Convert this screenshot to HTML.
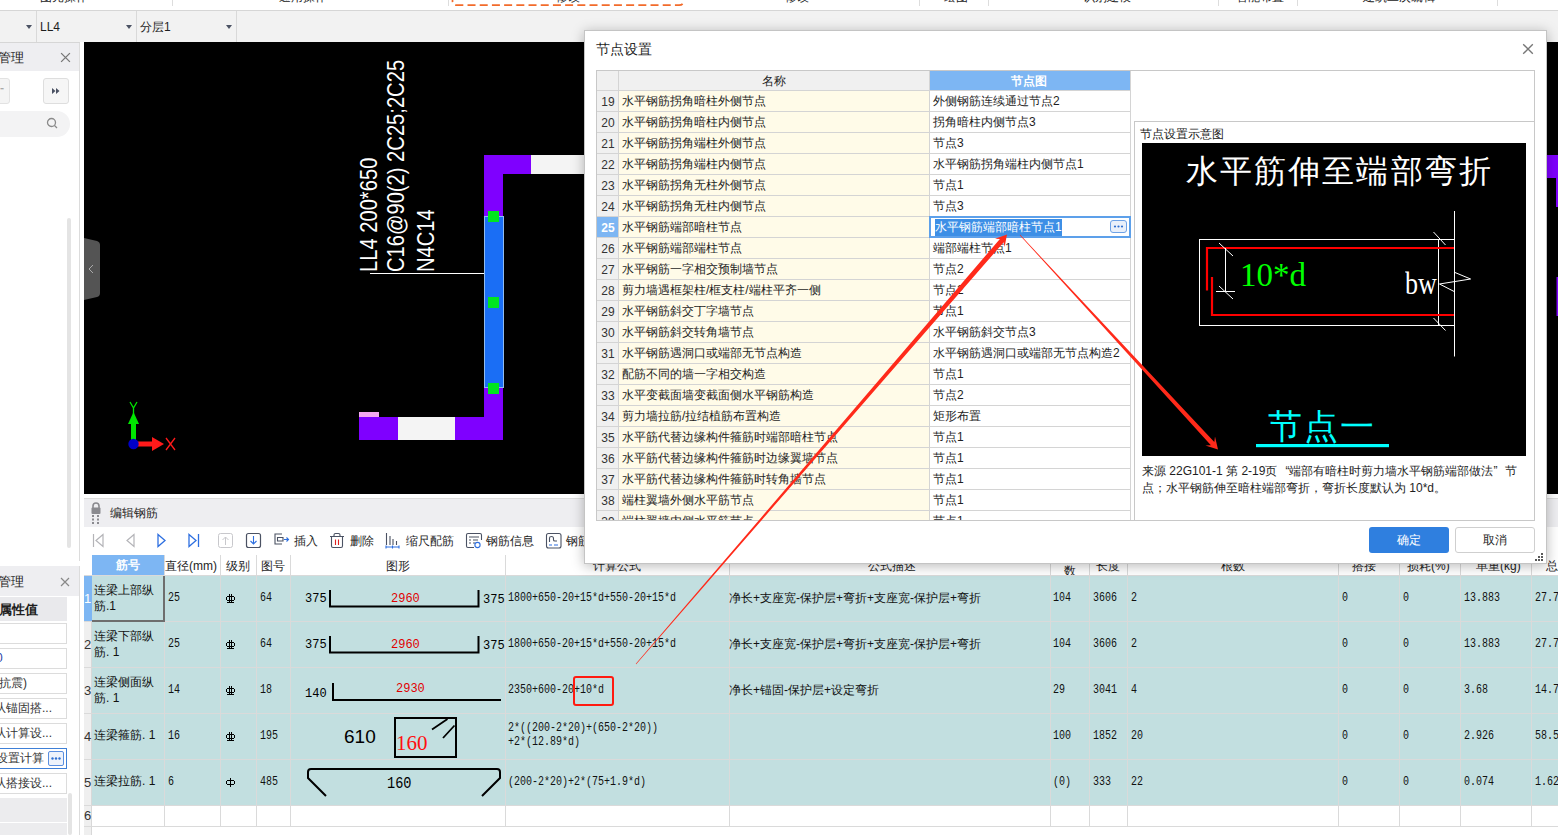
<!DOCTYPE html><html><head><meta charset="utf-8"><style>
*{box-sizing:border-box;margin:0;padding:0}
html,body{width:1558px;height:835px;overflow:hidden;background:#fff;font-family:"Liberation Sans",sans-serif;font-size:12px;color:#222;position:relative}
.ab{position:absolute}
.t{position:absolute;white-space:nowrap;line-height:1}
</style></head><body>
<div class="ab" style="left:0;top:0;width:1558px;height:11px;background:#fff;border-bottom:1px solid #d6d6d6;overflow:hidden">
<div class="t" style="left:40px;top:-9px;font-size:12px;color:#222">图元操作</div>
<div class="t" style="left:279px;top:-9px;font-size:12px;color:#222">通用操作</div>
<div class="t" style="left:556px;top:-9px;font-size:12px;color:#222">修改</div>
<div class="t" style="left:785px;top:-9px;font-size:12px;color:#222">修改</div>
<div class="t" style="left:944px;top:-9px;font-size:12px;color:#222">绘图</div>
<div class="t" style="left:1083px;top:-9px;font-size:12px;color:#222">识别建模</div>
<div class="t" style="left:1236px;top:-9px;font-size:12px;color:#222">智能布置</div>
<div class="t" style="left:1363px;top:-9px;font-size:12px;color:#222">建筑二次编辑</div>
<div class="ab" style="left:172px;top:0;width:1px;height:6px;background:#ddd"></div>
<div class="ab" style="left:448px;top:0;width:1px;height:6px;background:#ddd"></div>
<div class="ab" style="left:919px;top:0;width:1px;height:6px;background:#ddd"></div>
<div class="ab" style="left:988px;top:0;width:1px;height:6px;background:#ddd"></div>
<div class="ab" style="left:1218px;top:0;width:1px;height:6px;background:#ddd"></div>
<div class="ab" style="left:1297px;top:0;width:1px;height:6px;background:#ddd"></div>
<div class="ab" style="left:1497px;top:0;width:1px;height:6px;background:#ddd"></div>
<svg class="ab" style="left:448px;top:0" width="240" height="10"><path d="M4.5 -6 V1 Q4.5 5.2 9 5.2 H231 Q235.5 5.2 235.5 1 V-6" stroke="#f26b2b" stroke-width="1.7" stroke-dasharray="8 4.2" fill="none"/></svg>
</div>
<div class="ab" style="left:0;top:11px;width:1558px;height:31px;background:#f2f2f2"></div>
<div class="ab" style="left:36px;top:11px;width:1px;height:31px;background:#d9d9d9"></div>
<div class="ab" style="left:136px;top:11px;width:1px;height:31px;background:#d9d9d9"></div>
<div class="ab" style="left:236px;top:11px;width:1px;height:31px;background:#d9d9d9"></div>
<div class="ab" style="left:26px;top:25px;width:0;height:0;border-left:3px solid transparent;border-right:3px solid transparent;border-top:4px solid #4b5263"></div>
<div class="ab" style="left:126px;top:25px;width:0;height:0;border-left:3px solid transparent;border-right:3px solid transparent;border-top:4px solid #4b5263"></div>
<div class="ab" style="left:226px;top:25px;width:0;height:0;border-left:3px solid transparent;border-right:3px solid transparent;border-top:4px solid #4b5263"></div>
<div class="t" style="left:40px;top:21px;font-size:12px;color:#1e1e1e">LL4</div>
<div class="t" style="left:140px;top:21px;font-size:12px;color:#1e1e1e">分层1</div>
<div class="ab" style="left:84px;top:42px;width:1474px;height:452px;background:#000;overflow:hidden"></div>
<div class="ab" style="left:0;top:42px;width:80px;height:519px;background:#fff;border-right:1px solid #dcdcdc"></div>
<div class="ab" style="left:0;top:42px;width:79px;height:29px;background:#eeeef1"></div>
<div class="t" style="left:-2px;top:51px;font-size:13px;color:#1e1e1e">管理</div>
<div class="ab" style="left:0;top:42px;width:80px;height:1px;background:#d6d6d6"></div>
<svg class="ab" style="left:60px;top:52px" width="11" height="11" viewBox="0 0 10 10"><path d="M1 1L9 9M9 1L1 9" stroke="#777" stroke-width="1.2" fill="none"/></svg>
<div class="ab" style="left:-10px;top:78px;width:20px;height:26px;background:#f4f4f4;border:1px solid #e2e2e2;border-radius:3px"></div>
<div class="t" style="left:0px;top:86px;font-size:12px;color:#555">⁻</div>
<div class="ab" style="left:43px;top:78px;width:26px;height:26px;background:#f6f6f6;border:1px solid #dedede;border-radius:3px"></div>
<svg class="ab" style="left:51px;top:87px" width="10" height="8" viewBox="0 0 10 8"><path d="M1 1L4.5 4L1 7ZM5 1L8.5 4L5 7Z" fill="#4b5263"/></svg>
<div class="ab" style="left:-20px;top:111px;width:90px;height:26px;background:#f3f3f4;border-radius:13px"></div>
<svg class="ab" style="left:46px;top:117px" width="13" height="13" viewBox="0 0 13 13"><circle cx="5.5" cy="5.5" r="4" stroke="#8a8a8a" stroke-width="1.3" fill="none"/><path d="M8.5 8.5L11 11" stroke="#8a8a8a" stroke-width="1.3"/></svg>
<div class="ab" style="left:67px;top:218px;width:4px;height:330px;background:#e4e4e4;border-radius:2px"></div>
<div class="ab" style="left:0;top:566px;width:80px;height:269px;background:#fff;border-right:1px solid #dcdcdc"></div>
<div class="ab" style="left:0;top:566px;width:79px;height:30px;background:#eeeef1"></div>
<div class="t" style="left:-2px;top:575px;font-size:13px;color:#1e1e1e">管理</div>
<svg class="ab" style="left:60px;top:577px" width="10" height="10" viewBox="0 0 10 10"><path d="M1 1L9 9M9 1L1 9" stroke="#888" stroke-width="1.2" fill="none"/></svg>
<div class="ab" style="left:0;top:597px;width:67px;height:24px;background:#e9e9ec"></div>
<div class="t" style="left:-1px;top:603px;font-size:13px;font-weight:bold;color:#1e1e1e">属性值</div>
<div class="ab" style="left:-5px;top:623px;width:72px;height:21px;background:#fff;border:1px solid #dcdcdc"></div>
<div class="t" style="left:-1px;top:627px;font-size:12px;color:#333"></div>
<div class="ab" style="left:-5px;top:648px;width:72px;height:21px;background:#fff;border:1px solid #dcdcdc"></div>
<div class="t" style="left:-4px;top:652px;font-size:12px;color:#1f3fa6">0</div>
<div class="ab" style="left:-5px;top:673px;width:72px;height:21px;background:#fff;border:1px solid #dcdcdc"></div>
<div class="t" style="left:-1px;top:677px;font-size:12px;color:#333">抗震)</div>
<div class="ab" style="left:-5px;top:698px;width:72px;height:21px;background:#fff;border:1px solid #dcdcdc"></div>
<div class="t" style="left:-6px;top:702px;font-size:12px;color:#333">从锚固搭...</div>
<div class="ab" style="left:-5px;top:723px;width:72px;height:21px;background:#fff;border:1px solid #dcdcdc"></div>
<div class="t" style="left:-6px;top:727px;font-size:12px;color:#333">从计算设...</div>
<div class="ab" style="left:-5px;top:748px;width:72px;height:21px;background:#fff;border:1px solid #3e7fd6"></div>
<div class="t" style="left:-4px;top:752px;font-size:12px;color:#333">设置计算</div>
<div class="ab" style="left:-5px;top:773px;width:72px;height:21px;background:#fff;border:1px solid #dcdcdc"></div>
<div class="t" style="left:-6px;top:777px;font-size:12px;color:#333">从搭接设...</div>
<div class="ab" style="left:48px;top:751px;width:16px;height:15px;border:1px solid #5a8fe0;border-radius:2px;background:#eef3fb"></div>
<svg class="ab" style="left:48px;top:751px" width="16" height="15"><circle cx="4.5" cy="7.5" r="1.2" fill="#2f6fd0"/><circle cx="8" cy="7.5" r="1.2" fill="#2f6fd0"/><circle cx="11.5" cy="7.5" r="1.2" fill="#2f6fd0"/></svg>
<div class="ab" style="left:0;top:798px;width:67px;height:37px;background:#ececee"></div>
<div class="ab" style="left:0;top:822px;width:67px;height:1px;background:#fff"></div>
<div class="ab" style="left:68px;top:793px;width:4px;height:42px;background:#e4e4e4;border-radius:2px"></div>
<svg class="ab" style="left:0;top:0" width="1558" height="835">
<path d="M84 238 L97 241 Q100 242 100 245 L100 293 Q100 296 97 297 L84 300 Z" fill="#545454"/>
<path d="M93 265 L89 269 L93 273" stroke="#aaa" stroke-width="1" fill="none"/>
<rect x="484" y="155" width="47" height="19" fill="#7f00ff"/>
<rect x="531" y="155" width="60" height="19" fill="#f4f4f4"/>
<rect x="484" y="155" width="19" height="285" fill="#7f00ff"/>
<rect x="359" y="417" width="144" height="23" fill="#7f00ff"/>
<rect x="398" y="417" width="57" height="23" fill="#f4f4f4"/>
<rect x="359" y="412" width="20" height="5" fill="#f3a8f0"/>
<rect x="484.5" y="216.5" width="19" height="171" fill="#1a6ef5" stroke="#8fbcf0" stroke-width="1"/>
<rect x="488" y="211" width="11" height="11" fill="#00e61e"/>
<rect x="488" y="297" width="11" height="11" fill="#00e61e"/>
<rect x="488" y="383" width="11" height="11" fill="#00e61e"/>
<rect x="370" y="273" width="114" height="1" fill="#fff"/>
<rect x="1547" y="155" width="11" height="23" fill="#7f00ff"/>
<rect x="1556" y="178" width="2" height="29" fill="#7f00ff"/>
<rect x="1556.5" y="277" width="1.5" height="39" fill="#7f00ff"/>
<rect x="131" y="421" width="5" height="23" fill="#00e600"/>
<path d="M128 424 L133.5 412 L139 424 Z" fill="#00e600"/>
<rect x="134" y="441.5" width="20" height="5" fill="#ff1a1a"/>
<path d="M152 437 L164 444 L152 451 Z" fill="#ff1a1a"/>
<circle cx="133.5" cy="444" r="5.2" fill="#0000c8"/>
<path d="M130 402 L133.5 408 L137 402 M133.5 408 L133.5 414" stroke="#00e600" stroke-width="1.3" fill="none"/>
<path d="M166 438 L175 450 M175 438 L166 450" stroke="#ff1a1a" stroke-width="1.3" fill="none"/>
</svg>
<div class="t" style="left:356.5px;top:272px;font-size:24px;color:#fff;transform-origin:0 0;transform:rotate(-90deg) scaleX(0.84)">LL4 200*650</div>
<div class="t" style="left:384px;top:272px;font-size:24px;color:#fff;transform-origin:0 0;transform:rotate(-90deg) scaleX(0.84)">C16@90(2) 2C25;2C25</div>
<div class="t" style="left:414px;top:272px;font-size:24px;color:#fff;transform-origin:0 0;transform:rotate(-90deg) scaleX(0.84)">N4C14</div>
<div class="ab" style="left:84px;top:498px;width:1474px;height:337px;background:#fff;border-top:1px solid #dcdcdc"></div>
<div class="ab" style="left:84px;top:499px;width:1474px;height:28px;background:#eeeef1"></div>
<svg class="ab" style="left:89px;top:501px" width="14" height="24" viewBox="0 0 14 24"><path d="M4 7 V5 A3 3 0 0 1 10 5 V7" stroke="#8a8a8f" stroke-width="1.6" fill="none"/><rect x="2.5" y="6.5" width="9" height="6.5" rx="1" fill="#8a8a8f"/><rect x="3" y="14" width="2" height="2" fill="#8a8a8f"/><rect x="8" y="14" width="2" height="2" fill="#8a8a8f"/><rect x="3" y="17.5" width="2" height="2" fill="#8a8a8f"/><rect x="8" y="17.5" width="2" height="2" fill="#8a8a8f"/><rect x="3" y="21" width="2" height="2" fill="#8a8a8f"/><rect x="8" y="21" width="2" height="2" fill="#8a8a8f"/></svg>
<div class="t" style="left:110px;top:507px;font-size:12px;color:#1e1e1e">编辑钢筋</div>
<svg class="ab" style="left:84px;top:527px" width="500" height="28" viewBox="84 527 500 28"><path d="M93.5 534 V547" stroke="#b4b4b8" stroke-width="1.2"/><path d="M103 534.5 L96 540.5 L103 546.5 Z" stroke="#b4b4b8" stroke-width="1.2" fill="none"/><path d="M134 534.5 L127 540.5 L134 546.5 Z" stroke="#b4b4b8" stroke-width="1.2" fill="none"/><path d="M158 534.5 L165 540.5 L158 546.5 Z" stroke="#2d6fe0" stroke-width="1.3" fill="none"/><path d="M189 534.5 L196 540.5 L189 546.5 Z" stroke="#2d6fe0" stroke-width="1.3" fill="none"/><path d="M198.5 534 V547" stroke="#2d6fe0" stroke-width="1.3"/><rect x="218.5" y="533.5" width="14" height="14" rx="2" stroke="#c8c8cc" stroke-width="1" fill="none"/><path d="M225.5 537 V545 M222.5 540 L225.5 537 L228.5 540" stroke="#c8c8cc" stroke-width="1" fill="none"/><rect x="246.5" y="533.5" width="14" height="14" rx="2" stroke="#4b5263" stroke-width="1.2" fill="none"/><path d="M253.5 536 V544 M250.5 541 L253.5 544 L256.5 541" stroke="#2d6fe0" stroke-width="1.1" fill="none"/><path d="M282 534 H275 V544 H282 M277.5 537.5 H283 V541 H277.5 Z" stroke="#4b5263" stroke-width="1.1" fill="none"/><path d="M284 539.5 H288.5 M286.5 537.5 L288.5 539.5 L286.5 541.5" stroke="#2d6fe0" stroke-width="1.1" fill="none"/><path d="M330 536.5 H344 M334 536.5 V535 Q334 533.5 335.5 533.5 H338.5 Q340 533.5 340 535 V536.5 M331.5 537 V546 Q331.5 547.5 333 547.5 H341 Q342.5 547.5 342.5 546 V537" stroke="#4b5263" stroke-width="1.1" fill="none"/><path d="M335.5 539.5 V545 M338.5 539.5 V545" stroke="#e02020" stroke-width="1.1"/><path d="M386.5 533 V545 M390 536 V545 M393 539 V545 M396.5 541 V545" stroke="#4b5263" stroke-width="1.1" fill="none"/><path d="M385.5 547 H399.5 M386 545.5 V548.5 M392.5 545.5 V548.5 M399 545.5 V548.5" stroke="#2d6fe0" stroke-width="1.1" fill="none"/><path d="M474 547.5 H468 Q466.5 547.5 466.5 546 V535 Q466.5 533.5 468 533.5 H480 Q481.5 533.5 481.5 535 V540 M469 537 H479 M469 540 H471 M473 540 H478 M469 543 H471 M473 543 H475" stroke="#4b5263" stroke-width="1.1" fill="none"/><circle cx="477.5" cy="545" r="2.6" stroke="#2d6fe0" stroke-width="1.1" fill="none"/><rect x="546.5" y="533.5" width="14.5" height="14.5" rx="2" stroke="#4b5263" stroke-width="1.1" fill="none"/><path d="M549.5 542 V538 Q549.5 536.5 551.5 536.5 Q553.5 536.5 553.5 538.5 V540 Q553.5 541 555 541 H557" stroke="#4b5263" stroke-width="1.1" fill="none"/><path d="M549 545 H552 M554 545 H558" stroke="#2d6fe0" stroke-width="1.1"/></svg>
<div class="t" style="left:294px;top:535px;font-size:12px;color:#1e1e1e">插入</div>
<div class="t" style="left:350px;top:535px;font-size:12px;color:#1e1e1e">删除</div>
<div class="t" style="left:406px;top:535px;font-size:12px;color:#1e1e1e">缩尺配筋</div>
<div class="t" style="left:486px;top:535px;font-size:12px;color:#1e1e1e">钢筋信息</div>
<div class="t" style="left:566px;top:535px;font-size:12px;color:#1e1e1e">钢筋</div>
<div class="ab" style="left:92px;top:555px;width:73px;height:20px;background:#7db6f3"></div>
<div class="t" style="left:116px;top:559px;font-size:12px;color:#fff;font-weight:bold">筋号</div>
<div class="t" style="left:165px;top:560px;font-size:12px;color:#1e1e1e">直径(mm)</div>
<div class="t" style="left:226px;top:560px;font-size:12px;color:#1e1e1e">级别</div>
<div class="t" style="left:261px;top:560px;font-size:12px;color:#1e1e1e">图号</div>
<div class="t" style="left:386px;top:560px;font-size:12px;color:#1e1e1e">图形</div>
<div class="t" style="left:593px;top:560px;font-size:12px;color:#1e1e1e">计算公式</div>
<div class="t" style="left:868px;top:560px;font-size:12px;color:#1e1e1e">公式描述</div>
<div class="t" style="left:1064px;top:565px;font-size:12px;color:#1e1e1e">数</div>
<div class="t" style="left:1096px;top:560px;font-size:12px;color:#1e1e1e">长度</div>
<div class="t" style="left:1221px;top:560px;font-size:12px;color:#1e1e1e">根数</div>
<div class="t" style="left:1352px;top:560px;font-size:12px;color:#1e1e1e">搭接</div>
<div class="t" style="left:1407px;top:560px;font-size:12px;color:#1e1e1e">损耗(%)</div>
<div class="t" style="left:1476px;top:560px;font-size:12px;color:#1e1e1e">单重(kg)</div>
<div class="t" style="left:1546px;top:560px;font-size:12px;color:#1e1e1e">总重</div>
<div class="ab" style="left:92px;top:575px;width:1466px;height:230px;background:#c2dfe0"></div>
<div class="ab" style="left:84px;top:575px;width:8px;height:260px;background:#efefef;border-right:1px solid #d8d8d8"></div>
<div class="ab" style="left:84px;top:576px;width:8px;height:45px;background:#7db6f3"></div>
<div class="ab" style="left:164px;top:555px;width:1px;height:271px;background:#dadada"></div>
<div class="ab" style="left:220px;top:555px;width:1px;height:271px;background:#dadada"></div>
<div class="ab" style="left:256px;top:555px;width:1px;height:271px;background:#dadada"></div>
<div class="ab" style="left:290px;top:555px;width:1px;height:271px;background:#dadada"></div>
<div class="ab" style="left:505px;top:555px;width:1px;height:271px;background:#dadada"></div>
<div class="ab" style="left:729px;top:555px;width:1px;height:271px;background:#dadada"></div>
<div class="ab" style="left:1050px;top:555px;width:1px;height:271px;background:#dadada"></div>
<div class="ab" style="left:1089px;top:555px;width:1px;height:271px;background:#dadada"></div>
<div class="ab" style="left:1127px;top:555px;width:1px;height:271px;background:#dadada"></div>
<div class="ab" style="left:1338px;top:555px;width:1px;height:271px;background:#dadada"></div>
<div class="ab" style="left:1399px;top:555px;width:1px;height:271px;background:#dadada"></div>
<div class="ab" style="left:1460px;top:555px;width:1px;height:271px;background:#dadada"></div>
<div class="ab" style="left:1531px;top:555px;width:1px;height:271px;background:#dadada"></div>
<div class="ab" style="left:84px;top:575px;width:1474px;height:1px;background:#dadada"></div>
<div class="ab" style="left:84px;top:621px;width:1474px;height:1px;background:#dadada"></div>
<div class="ab" style="left:84px;top:667px;width:1474px;height:1px;background:#dadada"></div>
<div class="ab" style="left:84px;top:713px;width:1474px;height:1px;background:#dadada"></div>
<div class="ab" style="left:84px;top:759px;width:1474px;height:1px;background:#dadada"></div>
<div class="ab" style="left:84px;top:805px;width:1474px;height:1px;background:#dadada"></div>
<div class="ab" style="left:84px;top:826px;width:1474px;height:1px;background:#dadada"></div>
<div class="ab" style="left:92px;top:576px;width:73px;height:46px;border:2px solid #6e6e6e;border-top:none;border-left:none"></div>
<div class="t" style="left:84px;top:592px;font-size:13px;color:#fff">1</div>
<div class="t" style="left:84px;top:638px;font-size:13px;color:#333">2</div>
<div class="t" style="left:84px;top:684px;font-size:13px;color:#333">3</div>
<div class="t" style="left:84px;top:730px;font-size:13px;color:#333">4</div>
<div class="t" style="left:84px;top:776px;font-size:13px;color:#333">5</div>
<div class="t" style="left:84px;top:809px;font-size:13px;color:#333">6</div>
<div class="ab" style="left:94px;top:582px;font-size:12px;line-height:16px;color:#111;white-space:nowrap">连梁上部纵<br>筋.1</div>
<div class="t" style="left:168px;top:592px;font-family:'Liberation Mono',monospace;font-size:12px;color:#111;transform-origin:0 0;transform:scaleX(0.833);">25</div>
<div class="t" style="left:260px;top:592px;font-family:'Liberation Mono',monospace;font-size:12px;color:#111;transform-origin:0 0;transform:scaleX(0.833);">64</div>
<svg class="ab" style="left:224px;top:592px" width="14" height="12" shape-rendering="crispEdges"><g fill="#000"><rect x="5" y="2" width="1" height="8"/><rect x="7" y="2" width="1" height="8"/><rect x="3" y="4" width="7" height="1"/><rect x="3" y="8" width="7" height="1"/><rect x="2" y="5" width="1" height="3"/><rect x="10" y="5" width="1" height="3"/><rect x="3" y="10" width="7" height="1"/></g></svg>
<div class="t" style="left:508px;top:592px;font-family:'Liberation Mono',monospace;font-size:12px;color:#111;transform-origin:0 0;transform:scaleX(0.833);">1800+650-20+15*d+550-20+15*d</div>
<div class="t" style="left:729px;top:592px;font-size:12px;color:#111">净长+支座宽-保护层+弯折+支座宽-保护层+弯折</div>
<div class="t" style="left:1053px;top:592px;font-family:'Liberation Mono',monospace;font-size:12px;color:#111;transform-origin:0 0;transform:scaleX(0.833);">104</div>
<div class="t" style="left:1093px;top:592px;font-family:'Liberation Mono',monospace;font-size:12px;color:#111;transform-origin:0 0;transform:scaleX(0.833);">3606</div>
<div class="t" style="left:1131px;top:592px;font-family:'Liberation Mono',monospace;font-size:12px;color:#111;transform-origin:0 0;transform:scaleX(0.833);">2</div>
<div class="t" style="left:1342px;top:592px;font-family:'Liberation Mono',monospace;font-size:12px;color:#111;transform-origin:0 0;transform:scaleX(0.833);">0</div>
<div class="t" style="left:1403px;top:592px;font-family:'Liberation Mono',monospace;font-size:12px;color:#111;transform-origin:0 0;transform:scaleX(0.833);">0</div>
<div class="t" style="left:1464px;top:592px;font-family:'Liberation Mono',monospace;font-size:12px;color:#111;transform-origin:0 0;transform:scaleX(0.833);">13.883</div>
<div class="t" style="left:1535px;top:592px;font-family:'Liberation Mono',monospace;font-size:12px;color:#111;transform-origin:0 0;transform:scaleX(0.833);">27.7</div>
<div class="ab" style="left:94px;top:628px;font-size:12px;line-height:16px;color:#111;white-space:nowrap">连梁下部纵<br>筋. 1</div>
<div class="t" style="left:168px;top:638px;font-family:'Liberation Mono',monospace;font-size:12px;color:#111;transform-origin:0 0;transform:scaleX(0.833);">25</div>
<div class="t" style="left:260px;top:638px;font-family:'Liberation Mono',monospace;font-size:12px;color:#111;transform-origin:0 0;transform:scaleX(0.833);">64</div>
<svg class="ab" style="left:224px;top:638px" width="14" height="12" shape-rendering="crispEdges"><g fill="#000"><rect x="5" y="2" width="1" height="8"/><rect x="7" y="2" width="1" height="8"/><rect x="3" y="4" width="7" height="1"/><rect x="3" y="8" width="7" height="1"/><rect x="2" y="5" width="1" height="3"/><rect x="10" y="5" width="1" height="3"/><rect x="3" y="10" width="7" height="1"/></g></svg>
<div class="t" style="left:508px;top:638px;font-family:'Liberation Mono',monospace;font-size:12px;color:#111;transform-origin:0 0;transform:scaleX(0.833);">1800+650-20+15*d+550-20+15*d</div>
<div class="t" style="left:729px;top:638px;font-size:12px;color:#111">净长+支座宽-保护层+弯折+支座宽-保护层+弯折</div>
<div class="t" style="left:1053px;top:638px;font-family:'Liberation Mono',monospace;font-size:12px;color:#111;transform-origin:0 0;transform:scaleX(0.833);">104</div>
<div class="t" style="left:1093px;top:638px;font-family:'Liberation Mono',monospace;font-size:12px;color:#111;transform-origin:0 0;transform:scaleX(0.833);">3606</div>
<div class="t" style="left:1131px;top:638px;font-family:'Liberation Mono',monospace;font-size:12px;color:#111;transform-origin:0 0;transform:scaleX(0.833);">2</div>
<div class="t" style="left:1342px;top:638px;font-family:'Liberation Mono',monospace;font-size:12px;color:#111;transform-origin:0 0;transform:scaleX(0.833);">0</div>
<div class="t" style="left:1403px;top:638px;font-family:'Liberation Mono',monospace;font-size:12px;color:#111;transform-origin:0 0;transform:scaleX(0.833);">0</div>
<div class="t" style="left:1464px;top:638px;font-family:'Liberation Mono',monospace;font-size:12px;color:#111;transform-origin:0 0;transform:scaleX(0.833);">13.883</div>
<div class="t" style="left:1535px;top:638px;font-family:'Liberation Mono',monospace;font-size:12px;color:#111;transform-origin:0 0;transform:scaleX(0.833);">27.7</div>
<div class="ab" style="left:94px;top:674px;font-size:12px;line-height:16px;color:#111;white-space:nowrap">连梁侧面纵<br>筋. 1</div>
<div class="t" style="left:168px;top:684px;font-family:'Liberation Mono',monospace;font-size:12px;color:#111;transform-origin:0 0;transform:scaleX(0.833);">14</div>
<div class="t" style="left:260px;top:684px;font-family:'Liberation Mono',monospace;font-size:12px;color:#111;transform-origin:0 0;transform:scaleX(0.833);">18</div>
<svg class="ab" style="left:224px;top:684px" width="14" height="12" shape-rendering="crispEdges"><g fill="#000"><rect x="5" y="2" width="1" height="8"/><rect x="7" y="2" width="1" height="8"/><rect x="3" y="4" width="7" height="1"/><rect x="3" y="8" width="7" height="1"/><rect x="2" y="5" width="1" height="3"/><rect x="10" y="5" width="1" height="3"/><rect x="3" y="10" width="7" height="1"/></g></svg>
<div class="t" style="left:508px;top:684px;font-family:'Liberation Mono',monospace;font-size:12px;color:#111;transform-origin:0 0;transform:scaleX(0.833);">2350+600-20+10*d</div>
<div class="t" style="left:729px;top:684px;font-size:12px;color:#111">净长+锚固-保护层+设定弯折</div>
<div class="t" style="left:1053px;top:684px;font-family:'Liberation Mono',monospace;font-size:12px;color:#111;transform-origin:0 0;transform:scaleX(0.833);">29</div>
<div class="t" style="left:1093px;top:684px;font-family:'Liberation Mono',monospace;font-size:12px;color:#111;transform-origin:0 0;transform:scaleX(0.833);">3041</div>
<div class="t" style="left:1131px;top:684px;font-family:'Liberation Mono',monospace;font-size:12px;color:#111;transform-origin:0 0;transform:scaleX(0.833);">4</div>
<div class="t" style="left:1342px;top:684px;font-family:'Liberation Mono',monospace;font-size:12px;color:#111;transform-origin:0 0;transform:scaleX(0.833);">0</div>
<div class="t" style="left:1403px;top:684px;font-family:'Liberation Mono',monospace;font-size:12px;color:#111;transform-origin:0 0;transform:scaleX(0.833);">0</div>
<div class="t" style="left:1464px;top:684px;font-family:'Liberation Mono',monospace;font-size:12px;color:#111;transform-origin:0 0;transform:scaleX(0.833);">3.68</div>
<div class="t" style="left:1535px;top:684px;font-family:'Liberation Mono',monospace;font-size:12px;color:#111;transform-origin:0 0;transform:scaleX(0.833);">14.7</div>
<div class="t" style="left:94px;top:729px;font-size:12px;color:#111">连梁箍筋. 1</div>
<div class="t" style="left:168px;top:730px;font-family:'Liberation Mono',monospace;font-size:12px;color:#111;transform-origin:0 0;transform:scaleX(0.833);">16</div>
<div class="t" style="left:260px;top:730px;font-family:'Liberation Mono',monospace;font-size:12px;color:#111;transform-origin:0 0;transform:scaleX(0.833);">195</div>
<svg class="ab" style="left:224px;top:730px" width="14" height="12" shape-rendering="crispEdges"><g fill="#000"><rect x="5" y="2" width="1" height="8"/><rect x="7" y="2" width="1" height="8"/><rect x="3" y="4" width="7" height="1"/><rect x="3" y="8" width="7" height="1"/><rect x="2" y="5" width="1" height="3"/><rect x="10" y="5" width="1" height="3"/><rect x="3" y="10" width="7" height="1"/></g></svg>
<div class="ab" style="left:508px;top:721px;font-family:'Liberation Mono',monospace;font-size:12px;color:#111;transform-origin:0 0;transform:scaleX(0.833);line-height:14px;white-space:nowrap">2*((200-2*20)+(650-2*20))<br>+2*(12.89*d)</div>
<div class="t" style="left:1053px;top:730px;font-family:'Liberation Mono',monospace;font-size:12px;color:#111;transform-origin:0 0;transform:scaleX(0.833);">100</div>
<div class="t" style="left:1093px;top:730px;font-family:'Liberation Mono',monospace;font-size:12px;color:#111;transform-origin:0 0;transform:scaleX(0.833);">1852</div>
<div class="t" style="left:1131px;top:730px;font-family:'Liberation Mono',monospace;font-size:12px;color:#111;transform-origin:0 0;transform:scaleX(0.833);">20</div>
<div class="t" style="left:1342px;top:730px;font-family:'Liberation Mono',monospace;font-size:12px;color:#111;transform-origin:0 0;transform:scaleX(0.833);">0</div>
<div class="t" style="left:1403px;top:730px;font-family:'Liberation Mono',monospace;font-size:12px;color:#111;transform-origin:0 0;transform:scaleX(0.833);">0</div>
<div class="t" style="left:1464px;top:730px;font-family:'Liberation Mono',monospace;font-size:12px;color:#111;transform-origin:0 0;transform:scaleX(0.833);">2.926</div>
<div class="t" style="left:1535px;top:730px;font-family:'Liberation Mono',monospace;font-size:12px;color:#111;transform-origin:0 0;transform:scaleX(0.833);">58.5</div>
<div class="t" style="left:94px;top:775px;font-size:12px;color:#111">连梁拉筋. 1</div>
<div class="t" style="left:168px;top:776px;font-family:'Liberation Mono',monospace;font-size:12px;color:#111;transform-origin:0 0;transform:scaleX(0.833);">6</div>
<div class="t" style="left:260px;top:776px;font-family:'Liberation Mono',monospace;font-size:12px;color:#111;transform-origin:0 0;transform:scaleX(0.833);">485</div>
<svg class="ab" style="left:224px;top:776px" width="14" height="12" shape-rendering="crispEdges"><g fill="#000"><rect x="6" y="2" width="1" height="9"/><rect x="3" y="4" width="7" height="1"/><rect x="3" y="8" width="7" height="1"/><rect x="2" y="5" width="1" height="3"/><rect x="10" y="5" width="1" height="3"/></g></svg>
<div class="t" style="left:508px;top:776px;font-family:'Liberation Mono',monospace;font-size:12px;color:#111;transform-origin:0 0;transform:scaleX(0.833);">(200-2*20)+2*(75+1.9*d)</div>
<div class="t" style="left:1053px;top:776px;font-family:'Liberation Mono',monospace;font-size:12px;color:#111;transform-origin:0 0;transform:scaleX(0.833);">(0)</div>
<div class="t" style="left:1093px;top:776px;font-family:'Liberation Mono',monospace;font-size:12px;color:#111;transform-origin:0 0;transform:scaleX(0.833);">333</div>
<div class="t" style="left:1131px;top:776px;font-family:'Liberation Mono',monospace;font-size:12px;color:#111;transform-origin:0 0;transform:scaleX(0.833);">22</div>
<div class="t" style="left:1342px;top:776px;font-family:'Liberation Mono',monospace;font-size:12px;color:#111;transform-origin:0 0;transform:scaleX(0.833);">0</div>
<div class="t" style="left:1403px;top:776px;font-family:'Liberation Mono',monospace;font-size:12px;color:#111;transform-origin:0 0;transform:scaleX(0.833);">0</div>
<div class="t" style="left:1464px;top:776px;font-family:'Liberation Mono',monospace;font-size:12px;color:#111;transform-origin:0 0;transform:scaleX(0.833);">0.074</div>
<div class="t" style="left:1535px;top:776px;font-family:'Liberation Mono',monospace;font-size:12px;color:#111;transform-origin:0 0;transform:scaleX(0.833);">1.62</div>
<svg class="ab" style="left:290px;top:575px" width="215" height="230" viewBox="290 575 215 230">
<path d="M330 590 V606.5 H478.5 V590" stroke="#000" stroke-width="2" fill="none"/>
<path d="M330 636 V652.5 H478.5 V636" stroke="#000" stroke-width="2" fill="none"/>
<path d="M333 683 V700 H501" stroke="#000" stroke-width="2" fill="none"/>
<rect x="395" y="718" width="61" height="39" stroke="#000" stroke-width="2" fill="none"/>
<path d="M432 729.5 L447.5 719 M443 738 L454.5 725.5" stroke="#000" stroke-width="1.8" fill="none"/>
<path d="M326 796 L308 778 V772 Q308 769 311 769 H497 Q500 769 500 772 V778 L482 796" stroke="#000" stroke-width="2" fill="none"/>
</svg>
<div class="t" style="left:305px;top:593px;font-family:'Liberation Mono',monospace;font-size:12px;color:#000;letter-spacing:0px;transform-origin:0 0;transform:scaleX(1)">375</div>
<div class="t" style="left:391px;top:593px;font-family:'Liberation Mono',monospace;font-size:12px;color:#e00000;letter-spacing:0px;transform-origin:0 0;transform:scaleX(1)">2960</div>
<div class="t" style="left:483px;top:594px;font-family:'Liberation Mono',monospace;font-size:12px;color:#000;letter-spacing:0px;transform-origin:0 0;transform:scaleX(1)">375</div>
<div class="t" style="left:305px;top:639px;font-family:'Liberation Mono',monospace;font-size:12px;color:#000;letter-spacing:0px;transform-origin:0 0;transform:scaleX(1)">375</div>
<div class="t" style="left:391px;top:639px;font-family:'Liberation Mono',monospace;font-size:12px;color:#e00000;letter-spacing:0px;transform-origin:0 0;transform:scaleX(1)">2960</div>
<div class="t" style="left:483px;top:640px;font-family:'Liberation Mono',monospace;font-size:12px;color:#000;letter-spacing:0px;transform-origin:0 0;transform:scaleX(1)">375</div>
<div class="t" style="left:305px;top:688px;font-family:'Liberation Mono',monospace;font-size:12px;color:#000;letter-spacing:0px;transform-origin:0 0;transform:scaleX(1)">140</div>
<div class="t" style="left:396px;top:683px;font-family:'Liberation Mono',monospace;font-size:12px;color:#e00000;letter-spacing:0px;transform-origin:0 0;transform:scaleX(1)">2930</div>
<div class="t" style="left:344px;top:727px;font-family:'Liberation Sans',sans-serif;font-size:19px;color:#000;letter-spacing:0px;transform-origin:0 0;transform:scaleX(1)">610</div>
<div class="t" style="left:396px;top:733px;font-family:'Liberation Serif',serif;font-size:21px;color:#ff1010;letter-spacing:0px;transform-origin:0 0;transform:scaleX(1)">160</div>
<div class="t" style="left:387px;top:776px;font-family:'Liberation Mono',monospace;font-size:16px;color:#000;letter-spacing:0px;transform-origin:0 0;transform:scaleX(0.85)">160</div>
<div class="ab" style="left:584px;top:30px;width:963px;height:534px;background:#fff;border:1px solid #c4c4c4;box-shadow:0 2px 12px rgba(0,0,0,0.28)"></div>
<div class="t" style="left:596px;top:42px;font-size:14px;color:#1e1e1e">节点设置</div>
<svg class="ab" style="left:1522px;top:43px" width="12" height="12" viewBox="0 0 10 10"><path d="M1 1L9 9M9 1L1 9" stroke="#777" stroke-width="1.1" fill="none"/></svg>
<div class="ab" style="left:596px;top:70px;width:939px;height:451px;border:1px solid #c8c8c8;background:#fff;overflow:hidden">
<div class="ab" style="left:0;top:0;width:22px;height:20px;background:#f0f0f0"></div>
<div class="ab" style="left:22px;top:0;width:311px;height:20px;background:#f0f0f0"></div>
<div class="ab" style="left:333px;top:0;width:201px;height:20px;background:#7db6f3"></div>
<div class="t" style="left:165px;top:4px;font-size:12px;color:#1e1e1e">名称</div>
<div class="t" style="left:414px;top:4px;font-size:12px;color:#fff;font-weight:bold">节点图</div>
<div class="ab" style="left:0;top:20px;width:22px;height:21px;background:#f0f0f0"></div>
<div class="ab" style="left:22px;top:20px;width:311px;height:21px;background:#fffbe8"></div>
<div class="t" style="left:0;width:22px;text-align:center;top:25px;font-size:12px;color:#333;">19</div>
<div class="t" style="left:25px;top:24px;font-size:12px;color:#1e1e1e">水平钢筋拐角暗柱外侧节点</div>
<div class="t" style="left:336px;top:24px;font-size:12px;color:#1e1e1e">外侧钢筋连续通过节点2</div>
<div class="ab" style="left:0;top:41px;width:22px;height:21px;background:#f0f0f0"></div>
<div class="ab" style="left:22px;top:41px;width:311px;height:21px;background:#fffbe8"></div>
<div class="t" style="left:0;width:22px;text-align:center;top:46px;font-size:12px;color:#333;">20</div>
<div class="t" style="left:25px;top:45px;font-size:12px;color:#1e1e1e">水平钢筋拐角暗柱内侧节点</div>
<div class="t" style="left:336px;top:45px;font-size:12px;color:#1e1e1e">拐角暗柱内侧节点3</div>
<div class="ab" style="left:0;top:62px;width:22px;height:21px;background:#f0f0f0"></div>
<div class="ab" style="left:22px;top:62px;width:311px;height:21px;background:#fffbe8"></div>
<div class="t" style="left:0;width:22px;text-align:center;top:67px;font-size:12px;color:#333;">21</div>
<div class="t" style="left:25px;top:66px;font-size:12px;color:#1e1e1e">水平钢筋拐角端柱外侧节点</div>
<div class="t" style="left:336px;top:66px;font-size:12px;color:#1e1e1e">节点3</div>
<div class="ab" style="left:0;top:83px;width:22px;height:21px;background:#f0f0f0"></div>
<div class="ab" style="left:22px;top:83px;width:311px;height:21px;background:#fffbe8"></div>
<div class="t" style="left:0;width:22px;text-align:center;top:88px;font-size:12px;color:#333;">22</div>
<div class="t" style="left:25px;top:87px;font-size:12px;color:#1e1e1e">水平钢筋拐角端柱内侧节点</div>
<div class="t" style="left:336px;top:87px;font-size:12px;color:#1e1e1e">水平钢筋拐角端柱内侧节点1</div>
<div class="ab" style="left:0;top:104px;width:22px;height:21px;background:#f0f0f0"></div>
<div class="ab" style="left:22px;top:104px;width:311px;height:21px;background:#fffbe8"></div>
<div class="t" style="left:0;width:22px;text-align:center;top:109px;font-size:12px;color:#333;">23</div>
<div class="t" style="left:25px;top:108px;font-size:12px;color:#1e1e1e">水平钢筋拐角无柱外侧节点</div>
<div class="t" style="left:336px;top:108px;font-size:12px;color:#1e1e1e">节点1</div>
<div class="ab" style="left:0;top:125px;width:22px;height:21px;background:#f0f0f0"></div>
<div class="ab" style="left:22px;top:125px;width:311px;height:21px;background:#fffbe8"></div>
<div class="t" style="left:0;width:22px;text-align:center;top:130px;font-size:12px;color:#333;">24</div>
<div class="t" style="left:25px;top:129px;font-size:12px;color:#1e1e1e">水平钢筋拐角无柱内侧节点</div>
<div class="t" style="left:336px;top:129px;font-size:12px;color:#1e1e1e">节点3</div>
<div class="ab" style="left:0;top:146px;width:22px;height:21px;background:#7db6f3"></div>
<div class="ab" style="left:22px;top:146px;width:311px;height:21px;background:#fffbe8"></div>
<div class="t" style="left:0;width:22px;text-align:center;top:151px;font-size:12px;color:#fff;font-weight:bold">25</div>
<div class="t" style="left:25px;top:150px;font-size:12px;color:#1e1e1e">水平钢筋端部暗柱节点</div>
<div class="ab" style="left:0;top:167px;width:22px;height:21px;background:#f0f0f0"></div>
<div class="ab" style="left:22px;top:167px;width:311px;height:21px;background:#fffbe8"></div>
<div class="t" style="left:0;width:22px;text-align:center;top:172px;font-size:12px;color:#333;">26</div>
<div class="t" style="left:25px;top:171px;font-size:12px;color:#1e1e1e">水平钢筋端部端柱节点</div>
<div class="t" style="left:336px;top:171px;font-size:12px;color:#1e1e1e">端部端柱节点1</div>
<div class="ab" style="left:0;top:188px;width:22px;height:21px;background:#f0f0f0"></div>
<div class="ab" style="left:22px;top:188px;width:311px;height:21px;background:#fffbe8"></div>
<div class="t" style="left:0;width:22px;text-align:center;top:193px;font-size:12px;color:#333;">27</div>
<div class="t" style="left:25px;top:192px;font-size:12px;color:#1e1e1e">水平钢筋一字相交预制墙节点</div>
<div class="t" style="left:336px;top:192px;font-size:12px;color:#1e1e1e">节点2</div>
<div class="ab" style="left:0;top:209px;width:22px;height:21px;background:#f0f0f0"></div>
<div class="ab" style="left:22px;top:209px;width:311px;height:21px;background:#fffbe8"></div>
<div class="t" style="left:0;width:22px;text-align:center;top:214px;font-size:12px;color:#333;">28</div>
<div class="t" style="left:25px;top:213px;font-size:12px;color:#1e1e1e">剪力墙遇框架柱/框支柱/端柱平齐一侧</div>
<div class="t" style="left:336px;top:213px;font-size:12px;color:#1e1e1e">节点2</div>
<div class="ab" style="left:0;top:230px;width:22px;height:21px;background:#f0f0f0"></div>
<div class="ab" style="left:22px;top:230px;width:311px;height:21px;background:#fffbe8"></div>
<div class="t" style="left:0;width:22px;text-align:center;top:235px;font-size:12px;color:#333;">29</div>
<div class="t" style="left:25px;top:234px;font-size:12px;color:#1e1e1e">水平钢筋斜交丁字墙节点</div>
<div class="t" style="left:336px;top:234px;font-size:12px;color:#1e1e1e">节点1</div>
<div class="ab" style="left:0;top:251px;width:22px;height:21px;background:#f0f0f0"></div>
<div class="ab" style="left:22px;top:251px;width:311px;height:21px;background:#fffbe8"></div>
<div class="t" style="left:0;width:22px;text-align:center;top:256px;font-size:12px;color:#333;">30</div>
<div class="t" style="left:25px;top:255px;font-size:12px;color:#1e1e1e">水平钢筋斜交转角墙节点</div>
<div class="t" style="left:336px;top:255px;font-size:12px;color:#1e1e1e">水平钢筋斜交节点3</div>
<div class="ab" style="left:0;top:272px;width:22px;height:21px;background:#f0f0f0"></div>
<div class="ab" style="left:22px;top:272px;width:311px;height:21px;background:#fffbe8"></div>
<div class="t" style="left:0;width:22px;text-align:center;top:277px;font-size:12px;color:#333;">31</div>
<div class="t" style="left:25px;top:276px;font-size:12px;color:#1e1e1e">水平钢筋遇洞口或端部无节点构造</div>
<div class="t" style="left:336px;top:276px;font-size:12px;color:#1e1e1e">水平钢筋遇洞口或端部无节点构造2</div>
<div class="ab" style="left:0;top:293px;width:22px;height:21px;background:#f0f0f0"></div>
<div class="ab" style="left:22px;top:293px;width:311px;height:21px;background:#fffbe8"></div>
<div class="t" style="left:0;width:22px;text-align:center;top:298px;font-size:12px;color:#333;">32</div>
<div class="t" style="left:25px;top:297px;font-size:12px;color:#1e1e1e">配筋不同的墙一字相交构造</div>
<div class="t" style="left:336px;top:297px;font-size:12px;color:#1e1e1e">节点1</div>
<div class="ab" style="left:0;top:314px;width:22px;height:21px;background:#f0f0f0"></div>
<div class="ab" style="left:22px;top:314px;width:311px;height:21px;background:#fffbe8"></div>
<div class="t" style="left:0;width:22px;text-align:center;top:319px;font-size:12px;color:#333;">33</div>
<div class="t" style="left:25px;top:318px;font-size:12px;color:#1e1e1e">水平变截面墙变截面侧水平钢筋构造</div>
<div class="t" style="left:336px;top:318px;font-size:12px;color:#1e1e1e">节点2</div>
<div class="ab" style="left:0;top:335px;width:22px;height:21px;background:#f0f0f0"></div>
<div class="ab" style="left:22px;top:335px;width:311px;height:21px;background:#fffbe8"></div>
<div class="t" style="left:0;width:22px;text-align:center;top:340px;font-size:12px;color:#333;">34</div>
<div class="t" style="left:25px;top:339px;font-size:12px;color:#1e1e1e">剪力墙拉筋/拉结植筋布置构造</div>
<div class="t" style="left:336px;top:339px;font-size:12px;color:#1e1e1e">矩形布置</div>
<div class="ab" style="left:0;top:356px;width:22px;height:21px;background:#f0f0f0"></div>
<div class="ab" style="left:22px;top:356px;width:311px;height:21px;background:#fffbe8"></div>
<div class="t" style="left:0;width:22px;text-align:center;top:361px;font-size:12px;color:#333;">35</div>
<div class="t" style="left:25px;top:360px;font-size:12px;color:#1e1e1e">水平筋代替边缘构件箍筋时端部暗柱节点</div>
<div class="t" style="left:336px;top:360px;font-size:12px;color:#1e1e1e">节点1</div>
<div class="ab" style="left:0;top:377px;width:22px;height:21px;background:#f0f0f0"></div>
<div class="ab" style="left:22px;top:377px;width:311px;height:21px;background:#fffbe8"></div>
<div class="t" style="left:0;width:22px;text-align:center;top:382px;font-size:12px;color:#333;">36</div>
<div class="t" style="left:25px;top:381px;font-size:12px;color:#1e1e1e">水平筋代替边缘构件箍筋时边缘翼墙节点</div>
<div class="t" style="left:336px;top:381px;font-size:12px;color:#1e1e1e">节点1</div>
<div class="ab" style="left:0;top:398px;width:22px;height:21px;background:#f0f0f0"></div>
<div class="ab" style="left:22px;top:398px;width:311px;height:21px;background:#fffbe8"></div>
<div class="t" style="left:0;width:22px;text-align:center;top:403px;font-size:12px;color:#333;">37</div>
<div class="t" style="left:25px;top:402px;font-size:12px;color:#1e1e1e">水平筋代替边缘构件箍筋时转角墙节点</div>
<div class="t" style="left:336px;top:402px;font-size:12px;color:#1e1e1e">节点1</div>
<div class="ab" style="left:0;top:419px;width:22px;height:21px;background:#f0f0f0"></div>
<div class="ab" style="left:22px;top:419px;width:311px;height:21px;background:#fffbe8"></div>
<div class="t" style="left:0;width:22px;text-align:center;top:424px;font-size:12px;color:#333;">38</div>
<div class="t" style="left:25px;top:423px;font-size:12px;color:#1e1e1e">端柱翼墙外侧水平筋节点</div>
<div class="t" style="left:336px;top:423px;font-size:12px;color:#1e1e1e">节点1</div>
<div class="ab" style="left:0;top:440px;width:22px;height:21px;background:#f0f0f0"></div>
<div class="ab" style="left:22px;top:440px;width:311px;height:21px;background:#fffbe8"></div>
<div class="t" style="left:0;width:22px;text-align:center;top:445px;font-size:12px;color:#333;">39</div>
<div class="t" style="left:25px;top:444px;font-size:12px;color:#1e1e1e">端柱翼墙内侧水平筋节点</div>
<div class="t" style="left:336px;top:444px;font-size:12px;color:#1e1e1e">节点1</div>
<div class="ab" style="left:0;top:19px;width:534px;height:1px;background:#d4d4d4"></div>
<div class="ab" style="left:0;top:40px;width:534px;height:1px;background:#d4d4d4"></div>
<div class="ab" style="left:0;top:61px;width:534px;height:1px;background:#d4d4d4"></div>
<div class="ab" style="left:0;top:82px;width:534px;height:1px;background:#d4d4d4"></div>
<div class="ab" style="left:0;top:103px;width:534px;height:1px;background:#d4d4d4"></div>
<div class="ab" style="left:0;top:124px;width:534px;height:1px;background:#d4d4d4"></div>
<div class="ab" style="left:0;top:145px;width:534px;height:1px;background:#d4d4d4"></div>
<div class="ab" style="left:0;top:166px;width:534px;height:1px;background:#d4d4d4"></div>
<div class="ab" style="left:0;top:187px;width:534px;height:1px;background:#d4d4d4"></div>
<div class="ab" style="left:0;top:208px;width:534px;height:1px;background:#d4d4d4"></div>
<div class="ab" style="left:0;top:229px;width:534px;height:1px;background:#d4d4d4"></div>
<div class="ab" style="left:0;top:250px;width:534px;height:1px;background:#d4d4d4"></div>
<div class="ab" style="left:0;top:271px;width:534px;height:1px;background:#d4d4d4"></div>
<div class="ab" style="left:0;top:292px;width:534px;height:1px;background:#d4d4d4"></div>
<div class="ab" style="left:0;top:313px;width:534px;height:1px;background:#d4d4d4"></div>
<div class="ab" style="left:0;top:334px;width:534px;height:1px;background:#d4d4d4"></div>
<div class="ab" style="left:0;top:355px;width:534px;height:1px;background:#d4d4d4"></div>
<div class="ab" style="left:0;top:376px;width:534px;height:1px;background:#d4d4d4"></div>
<div class="ab" style="left:0;top:397px;width:534px;height:1px;background:#d4d4d4"></div>
<div class="ab" style="left:0;top:418px;width:534px;height:1px;background:#d4d4d4"></div>
<div class="ab" style="left:0;top:439px;width:534px;height:1px;background:#d4d4d4"></div>
<div class="ab" style="left:21px;top:0;width:1px;height:460px;background:#d4d4d4"></div>
<div class="ab" style="left:332px;top:0;width:1px;height:460px;background:#d4d4d4"></div>
<div class="ab" style="left:533px;top:0;width:1px;height:460px;background:#d4d4d4"></div>
<div class="ab" style="left:332px;top:145px;width:202px;height:22px;border:2px solid #5da0ea;background:#fff"></div>
<div class="ab" style="left:338px;top:148px;width:127px;height:17px;background:#3d8fe6"></div>
<div class="t" style="left:338px;top:150px;font-size:12px;color:#fff">水平钢筋端部暗柱节点1</div>
<div class="ab" style="left:513px;top:149px;width:17px;height:13px;border:1px solid #6ea2e6;border-radius:3px;background:#eaf0fa"></div>
<svg class="ab" style="left:513px;top:149px" width="17" height="13"><circle cx="5" cy="6.5" r="1.1" fill="#2f6fd0"/><circle cx="8.5" cy="6.5" r="1.1" fill="#2f6fd0"/><circle cx="12" cy="6.5" r="1.1" fill="#2f6fd0"/></svg>
</div>
<div class="ab" style="left:1134px;top:121px;width:401px;height:400px;border:1px solid #c8c8c8;background:#fff"></div>
<div class="t" style="left:1140px;top:128px;font-size:12px;color:#222">节点设置示意图</div>
<div class="ab" style="left:1142px;top:143px;width:384px;height:313px;background:#000"></div>
<div class="ab" style="left:1142px;top:463px;width:390px;font-size:12px;line-height:17px;color:#1e1e1e;white-space:nowrap">来源 22G101-1 第 2-19页<span style='display:inline-block;width:12px;text-align:right'>“</span>端部有暗柱时剪力墙水平钢筋端部做法<span style='display:inline-block;width:12px'>”</span>节<br>点；水平钢筋伸至暗柱端部弯折，弯折长度默认为 10*d。</div>
<div class="ab" style="left:1369px;top:527px;width:80px;height:26px;background:#2f7fdf;border-radius:3px"></div>
<div class="t" style="left:1397px;top:534px;font-size:12px;color:#fff">确定</div>
<div class="ab" style="left:1455px;top:527px;width:80px;height:26px;background:#fff;border:1px solid #cfcfcf;border-radius:3px"></div>
<div class="t" style="left:1483px;top:534px;font-size:12px;color:#1e1e1e">取消</div>
<svg class="ab" style="left:1534px;top:552px" width="10" height="10" shape-rendering="crispEdges"><g fill="#5a5a5a"><rect x="7" y="1" width="2" height="2"/><rect x="4" y="4" width="2" height="2"/><rect x="7" y="4" width="2" height="2"/><rect x="1" y="7" width="2" height="2"/><rect x="4" y="7" width="2" height="2"/><rect x="7" y="7" width="2" height="2"/></g></svg>
<svg class="ab" style="left:0;top:0" width="1558" height="835">
<rect x="1199.5" y="239.5" width="255" height="86" stroke="#fff" stroke-width="1" fill="none"/>
<path d="M1454.5 211 V356.5 M1438.5 240 V325" stroke="#fff" stroke-width="1" fill="none"/>
<path d="M1454 248 H1207 V290.5" stroke="#ff0000" stroke-width="2.2" fill="none"/>
<path d="M1212 277 V315 H1454" stroke="#ff0000" stroke-width="2.2" fill="none"/>
<path d="M1225.5 248 V291.5 M1216 291.5 H1235 M1219 243 L1233 256 M1219 286 L1233 299 M1433.5 232 L1445.5 245 M1433.5 318 L1445.5 330.5" stroke="#fff" stroke-width="1" fill="none"/>
<path d="M1454.5 272.3 L1470.6 279 L1439.5 284 L1454.5 291.7" stroke="#fff" stroke-width="1" fill="none"/>
<rect x="1256" y="444" width="133" height="3.2" fill="#00ffff"/>
</svg>
<div class="t" style="left:1186px;top:155px;font-family:'Liberation Serif',serif;font-size:32px;color:#fff;letter-spacing:2.1px">水平筋伸至端部弯折</div>
<div class="t" style="left:1240px;top:259px;font-family:'Liberation Serif',serif;font-size:33px;color:#00ff00">10*d</div>
<div class="t" style="left:1405px;top:268px;font-family:'Liberation Serif',serif;font-size:31px;color:#fff;transform-origin:0 0;transform:scaleX(0.84)">bw</div>
<div class="t" style="left:1268px;top:410px;font-family:'Liberation Serif',serif;font-size:34px;color:#00ffff;letter-spacing:2px">节点一</div>
<div class="ab" style="left:573px;top:676px;width:41px;height:30px;border:2.7px solid #ff1a10;border-radius:3px"></div>
<svg class="ab" style="left:0;top:0" width="1558" height="835">
<polygon points="636.2,664.2 1003.7,242.2 1004.6,246.9 1007.0,234.5 995.0,238.7 999.9,238.9 635.8,663.8" fill="#ff2a1a"/>
<polygon points="1019.8,235.2 1210.9,445.2 1205.4,445.5 1218.0,449.5 1215.0,436.6 1214.3,442.1 1020.2,234.8" fill="#ff2a1a"/>
</svg></body></html>
